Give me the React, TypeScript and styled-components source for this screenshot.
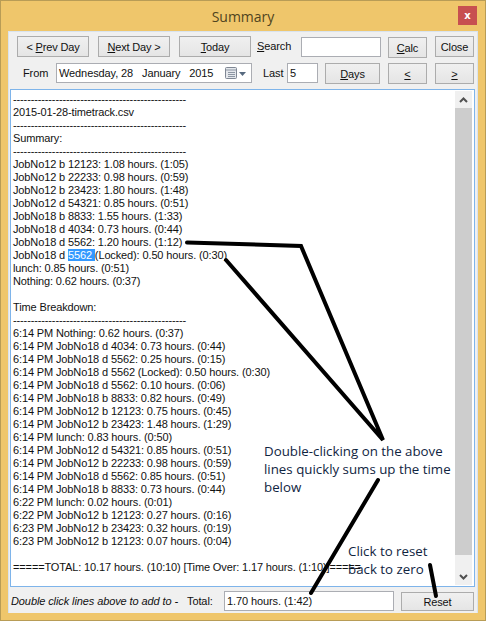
import React from "react";
import styled, { createGlobalStyle } from "styled-components";

const Global = createGlobalStyle`
  html, body { margin: 0; padding: 0; background: #efc66b; }
  body { width: 486px; height: 621px; overflow: hidden; font-family: "Liberation Sans", Arial, sans-serif; }
`;

const Win = styled.div`
  position: relative;
  box-sizing: border-box;
  width: 486px;
  height: 621px;
  background: #efc66b;
  border: 1px solid #b89c56;
  display: flex;
  flex-direction: column;
`;
const TitleBar = styled.div`
  height: 30px;
  flex: none;
  display: flex;
  align-items: center;
  justify-content: center;
  position: relative;
  font-family: "Open Sans", sans-serif;
  font-size: 14px;
  color: #4f4420;
`;
const CloseX = styled.div`
  position: absolute;
  right: 8px;
  top: 5px;
  width: 19px;
  height: 19px;
  background: #c75050;
  color: #fff;
  font: bold 10px/19px "DejaVu Sans", sans-serif;
  text-align: center;
`;
const Panel = styled.div`
  flex: 1;
  margin: 0 7px 7px;
  background: #f0f0f0;
  border: 1px solid #d9e3ee;
  border-bottom: none;
  display: flex;
  flex-direction: column;
  min-height: 0;
  font-size: 11px;
  letter-spacing: -0.1px;
  color: #111;
`;
const Row = styled.div<{ $top: number }>`
  display: flex;
  align-items: flex-start;
  height: 20px;
  margin-top: ${(p) => p.$top}px;
  padding-left: 8px;
`;
const Btn = styled.button<{ $w: number; $ml?: number; $dy?: number; $h?: number }>`
  box-sizing: border-box;
  width: ${(p) => p.$w}px;
  height: ${(p) => p.$h ?? 21}px;
  margin-left: ${(p) => p.$ml ?? 0}px;
  margin-top: ${(p) => p.$dy ?? 0}px;
  padding: 0;
  border: 1px solid #acacac;
  background: linear-gradient(#f0f0f0, #e5e5e5);
  font: 11px "Liberation Sans", Arial, sans-serif;
  letter-spacing: -0.15px;
  color: #111;
  flex: none;
`;
const Label = styled.span<{ $ml: number; $w: number }>`
  flex: none;
  width: ${(p) => p.$w}px;
  margin-left: ${(p) => p.$ml}px;
  line-height: 20px;
`;
const Field = styled.div<{ $w: number; $ml?: number; $dy?: number }>`
  box-sizing: border-box;
  flex: none;
  width: ${(p) => p.$w}px;
  height: 20px;
  margin-left: ${(p) => p.$ml ?? 0}px;
  margin-top: ${(p) => p.$dy ?? 0}px;
  background: #fff;
  border: 1px solid #abadb3;
  padding-left: 2px;
  line-height: 18px;
  white-space: pre;
  display: flex;
  align-items: center;
  justify-content: space-between;
`;
const DateIcon = styled.svg`
  flex: none;
  margin-right: 1px;
`;
const LogBox = styled.div`
  height: 498px;
  margin: 6px 2px 0 1px;
  box-sizing: border-box;
  border: 1px solid #7eb4ea;
  background: #fff;
  display: flex;
  flex: none;
`;
const LogText = styled.pre`
  flex: 1;
  margin: 0;
  padding: 3px 0 0 2px;
  font: 11px/13px "Liberation Sans", Arial, sans-serif;
  letter-spacing: -0.13px;
  color: #111;
  overflow: hidden;
  white-space: pre;
`;
const Sel = styled.span`
  background: #3399ff;
  color: #fff;
`;
const Scroll = styled.div`
  width: 17px;
  flex: none;
  margin: 1px 2px 1px 0;
  background: #f0f0f0;
  display: flex;
  flex-direction: column;
`;
const Arrow = styled.div`
  height: 17px;
  flex: none;
  display: flex;
  align-items: center;
  justify-content: center;
`;
const Thumb = styled.div`
  height: 447px;
  background: #cdcdcd;
  flex: none;
`;
const Spacer = styled.div`
  flex: 1;
`;
const Foot = styled.div`
  display: flex;
  align-items: flex-start;
  padding-left: 2px;
  margin-top: 4px;
`;
const Hint = styled.i`
  flex: none;
  width: 176px;
  line-height: 20px;
  white-space: nowrap;
`;
const Overlay = styled.svg`
  position: absolute;
  left: -1px;
  top: -1px;
  pointer-events: none;
`;
const Note = styled.div<{ $x: number; $y: number }>`
  position: absolute;
  left: ${(p) => p.$x}px;
  top: ${(p) => p.$y}px;
  font: 13.300px/18px "Open Sans", sans-serif;
  color: #10253f;
  white-space: pre;
`;

const dash = "-".repeat(49);
const before = [
  dash, "2015-01-28-timetrack.csv", dash, "Summary:", dash,
  "JobNo12 b 12123: 1.08 hours. (1:05)",
  "JobNo12 b 22233: 0.98 hours. (0:59)",
  "JobNo12 b 23423: 1.80 hours. (1:48)",
  "JobNo12 d 54321: 0.85 hours. (0:51)",
  "JobNo18 b 8833: 1.55 hours. (1:33)",
  "JobNo18 d 4034: 0.73 hours. (0:44)",
  "JobNo18 d 5562: 1.20 hours. (1:12)",
  "JobNo18 d ",
].join("\n");
const after = [
  "(Locked): 0.50 hours. (0:30)",
  "lunch: 0.85 hours. (0:51)",
  "Nothing: 0.62 hours. (0:37)",
  "",
  "Time Breakdown:",
  dash,
  "6:14 PM Nothing: 0.62 hours. (0:37)",
  "6:14 PM JobNo18 d 4034: 0.73 hours. (0:44)",
  "6:14 PM JobNo18 d 5562: 0.25 hours. (0:15)",
  "6:14 PM JobNo18 d 5562 (Locked): 0.50 hours. (0:30)",
  "6:14 PM JobNo18 d 5562: 0.10 hours. (0:06)",
  "6:14 PM JobNo18 b 8833: 0.82 hours. (0:49)",
  "6:14 PM JobNo12 b 12123: 0.75 hours. (0:45)",
  "6:14 PM JobNo12 b 23423: 1.48 hours. (1:29)",
  "6:14 PM lunch: 0.83 hours. (0:50)",
  "6:14 PM JobNo12 d 54321: 0.85 hours. (0:51)",
  "6:14 PM JobNo12 b 22233: 0.98 hours. (0:59)",
  "6:14 PM JobNo18 d 5562: 0.85 hours. (0:51)",
  "6:14 PM JobNo18 b 8833: 0.73 hours. (0:44)",
  "6:22 PM lunch: 0.02 hours. (0:01)",
  "6:22 PM JobNo12 b 12123: 0.27 hours. (0:16)",
  "6:23 PM JobNo12 b 23423: 0.32 hours. (0:19)",
  "6:23 PM JobNo12 b 12123: 0.07 hours. (0:04)",
  "",
  "=====TOTAL: 10.17 hours. (10:10) [Time Over: 1.17 hours. (1:10)]=====",
].join("\n");

export default function App() {
  return (
    <Win>
      <Global />
      <TitleBar>
        Summary
        <CloseX>x</CloseX>
      </TitleBar>
      <Panel>
        <Row $top={4}>
          <Btn $w={72}>&lt; <u>P</u>rev Day</Btn>
          <Btn $w={72} $ml={9}><u>N</u>ext Day &gt;</Btn>
          <Btn $w={72} $ml={9}><u>T</u>oday</Btn>
          <Label $ml={6} $w={44}><u>S</u>earch</Label>
          <Field $w={80} $dy={1} />
          <Btn $w={39} $ml={7} $dy={1}><u>C</u>alc</Btn>
          <Btn $w={39} $ml={8}>Close</Btn>
        </Row>
        <Row $top={7}>
          <Label $ml={6} $w={33}>From</Label>
          <Field $w={196}>
            {"Wednesday, 28   January   2015"}
            <DateIcon width="26" height="14" viewBox="0 0 26 14">
              <rect x="1.500" y="1.500" width="11" height="11" rx="1" fill="#e4e7ec" stroke="#7f8794" />
              <path d="M2 4h10M4 6.500h7M4 8.500h7M4 10.500h7" stroke="#8d96a3" strokeWidth="1" />
              <path d="M15 6h7l-3.500 4z" fill="#56697f" />
            </DateIcon>
          </Field>
          <Label $ml={11} $w={24}>Last</Label>
          <Field $w={31}>5</Field>
          <Btn $w={55} $ml={7}><u>D</u>ays</Btn>
          <Btn $w={39} $ml={8}><u>&lt;</u></Btn>
          <Btn $w={39} $ml={8}><u>&gt;</u></Btn>
        </Row>
        <LogBox>
          <LogText>
            {before}
            <Sel>5562 </Sel>
            {after}
          </LogText>
          <Scroll>
            <Arrow>
              <svg width="9" height="6" viewBox="0 0 9 6"><path d="M1 5l3.500-3.500L8 5" fill="none" stroke="#505050" strokeWidth="2" /></svg>
            </Arrow>
            <Thumb />
            <Spacer />
            <Arrow>
              <svg width="9" height="6" viewBox="0 0 9 6"><path d="M1 1l3.500 3.500L8 1" fill="none" stroke="#505050" strokeWidth="2" /></svg>
            </Arrow>
          </Scroll>
        </LogBox>
        <Foot>
          <Hint>Double click lines above to add to -</Hint>
          <Label $ml={0} $w={37}>Total:</Label>
          <Field $w={170}>1.70 hours. (1:42)</Field>
          <Btn $w={73} $ml={7} $dy={1} $h={19}>Reset</Btn>
        </Foot>
      </Panel>
      <Overlay width="486" height="621" viewBox="0 0 486 621">
        <path d="M187 242.500L301 246L383 440L226 260" fill="none" stroke="#000" strokeWidth="4" strokeLinejoin="miter" strokeLinecap="round" />
        <path d="M378 480L311 593" fill="none" stroke="#000" strokeWidth="4" strokeLinecap="round" />
        <path d="M430 565L436 596" fill="none" stroke="#000" strokeWidth="4" strokeLinecap="round" />
      </Overlay>
      <Note $x={263} $y={441}>{"Double-clicking on the above\nlines quickly sums up the time\nbelow"}</Note>
      <Note $x={347} $y={541}>{"Click to reset\nback to zero"}</Note>
    </Win>
  );
}
